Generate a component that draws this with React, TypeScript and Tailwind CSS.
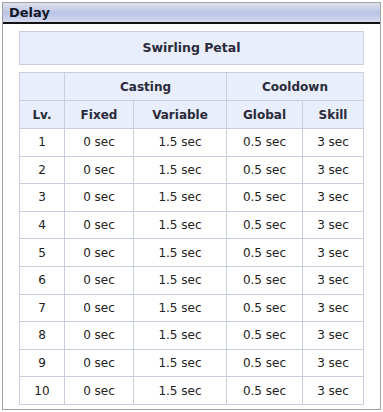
const rows = Array.from({ length: 10 }, (_, i) => i + 1);

export default function App() {
  const cell = "border border-[#c9cde0] text-center font-normal";
  const head = "border border-[#c9cde0] bg-[#e8eefb] text-center font-bold text-[#2a2a3a]";
  return (
    <div className="h-[412px] w-[383px] bg-white pl-[2px] pt-[2px] font-['DejaVu_Sans',Verdana,sans-serif]">
      <div className="h-[408px] w-[379px] border border-[#a3a3a3] bg-white">
        <div className="flex h-[21px] items-center border-b-2 border-[#111] bg-[linear-gradient(to_bottom,#dfe2ec_0%,#c9d0e8_30%,#b9c4e6_55%,#c8d0ea_80%,#d6dbec_100%)] pl-[6px] text-[13px] font-bold text-[#111827]">
          Delay
        </div>
        <div className="px-[16px] pt-[7px]">
          <div className="flex h-[34px] w-[345px] items-center justify-center border border-[#c9cde0] bg-[#e8eefb] text-[12.5px] font-bold text-[#2a2a3a]">
            Swirling Petal
          </div>
          <table className="mt-[7px] w-[345px] border-collapse text-[12px] text-[#222]">
            <colgroup>
              <col className="w-[45px]" />
              <col className="w-[69px]" />
              <col className="w-[93px]" />
              <col className="w-[76px]" />
              <col className="w-[61px]" />
            </colgroup>
            <thead>
              <tr className="h-[28px]">
                <th className={head}></th>
                <th className={head} colSpan={2}>Casting</th>
                <th className={head} colSpan={2}>Cooldown</th>
              </tr>
              <tr className="h-[28px]">
                <th className={head}>Lv.</th>
                <th className={head}>Fixed</th>
                <th className={head}>Variable</th>
                <th className={head}>Global</th>
                <th className={head}>Skill</th>
              </tr>
            </thead>
            <tbody>
              {rows.map((lv) => (
                <tr key={lv} className="h-[27.6px]">
                  <td className={cell}>{lv}</td>
                  <td className={cell}>0 sec</td>
                  <td className={cell}>1.5 sec</td>
                  <td className={cell}>0.5 sec</td>
                  <td className={cell}>3 sec</td>
                </tr>
              ))}
            </tbody>
          </table>
        </div>
      </div>
    </div>
  );
}
